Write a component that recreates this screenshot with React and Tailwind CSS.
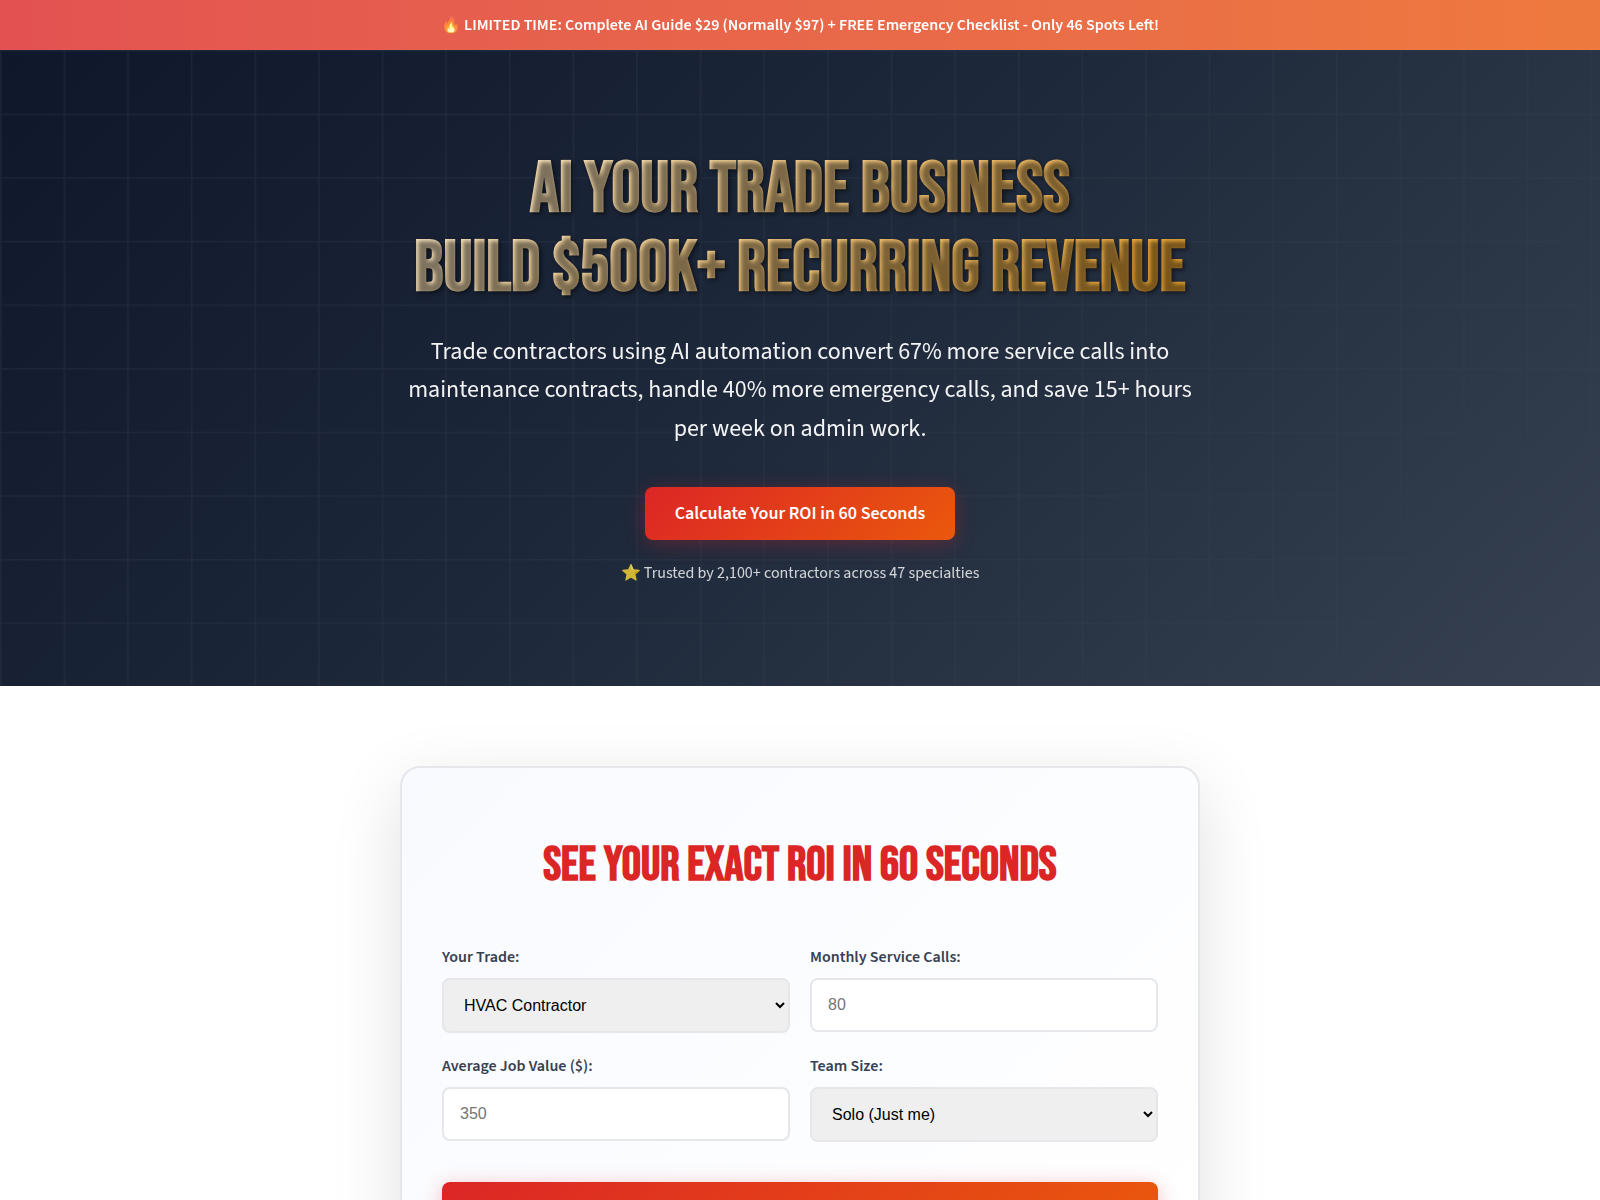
function Grid() {
  return (
    <svg
      aria-hidden="true"
      className="absolute inset-0 h-full w-full overflow-hidden opacity-30"
      viewBox="0 0 100 100"
      preserveAspectRatio="xMinYMin meet"
    >
      <defs>
        <pattern id="grid" width="10" height="10" patternUnits="userSpaceOnUse">
          <path d="M 10 0 L 0 0 0 10" fill="none" stroke="#374151" strokeWidth="0.5" />
        </pattern>
      </defs>
      <rect width="1000" height="100" fill="url(#grid)" />
    </svg>
  );
}

const controlBase =
  "w-full rounded-lg border-2 border-[#e5e7eb] p-4 font-['Liberation_Sans',sans-serif] text-base";

function Field({ id, label, children }) {
  return (
    <div>
      <label htmlFor={id} className="mb-2 block font-semibold text-[#374151]">
        {label}
      </label>
      {children}
    </div>
  );
}

function SelectField({ id, label, options }) {
  return (
    <Field id={id} label={label}>
      <select id={id} className={`${controlBase} block h-[55px] bg-[#efefef] text-black`}>
        {options.map((option) => (
          <option key={option}>{option}</option>
        ))}
      </select>
    </Field>
  );
}

function NumberField({ id, label, placeholder }) {
  return (
    <Field id={id} label={label}>
      <input
        id={id}
        type="number"
        placeholder={placeholder}
        className={`${controlBase} block h-[54px] bg-white text-black placeholder:text-[#757575]`}
      />
    </Field>
  );
}

export default function App() {
  return (
    <div className="min-h-screen bg-white font-['Source_Sans_Pro','Source_Sans_3','Noto_Sans_CJK_SC',sans-serif] leading-[26px] text-[#1f2937]">
      <div className="bg-linear-to-r from-[#dc2626] to-[#ea580c] px-5 py-3 text-center font-semibold text-white opacity-80">
        🔥 LIMITED TIME: Complete AI Guide $29 (Normally $97) + FREE Emergency Checklist - Only 46 Spots Left!
      </div>

      <header className="relative overflow-hidden bg-linear-[135deg,#0f172a_0%,#1e293b_50%,#374151_100%] px-5 py-[100px] text-center text-white">
        <Grid />
        <div className="relative mx-auto flex max-w-[800px] flex-col items-center">
          <h1 className="mb-[25px] w-full bg-linear-[135deg,#fff1d6,#f0a52a] bg-clip-text font-['Bebas_Neue','Oswald',sans-serif] text-7xl leading-[79px] font-bold text-transparent [text-shadow:2px_2px_4px_rgba(0,0,0,0.5)]">
            AI Your Trade Business
            <br />
            Build $500K+ Recurring Revenue
          </h1>
          <p className="mb-[39px] text-2xl leading-[1.6] opacity-95">
            Trade contractors using AI automation convert 67% more service calls into maintenance contracts, handle 40%
            more emergency calls, and save 15+ hours per week on admin work.
          </p>
          <button
            type="button"
            className="rounded-lg bg-linear-[135deg,#dc2626,#ea580c] px-[30px] py-3 text-lg leading-[29px] font-semibold text-white shadow-[0_4px_20px_rgba(220,38,38,0.3)]"
          >
            Calculate Your ROI in 60 Seconds
          </button>
          <p className="mt-5 opacity-80">⭐ Trusted by 2,100+ contractors across 47 specialties</p>
        </div>
      </header>

      <main className="px-5 py-20">
        <form
          onSubmit={(event) => event.preventDefault()}
          className="mx-auto max-w-[800px] rounded-[20px] border-2 border-[#e5e7eb] bg-linear-[135deg,#f8faff,#ffffff] p-10 shadow-[0_20px_70px_rgba(0,0,0,0.12)]"
        >
          <h2 className="mt-5 mb-10 text-center font-['Bebas_Neue','Oswald',sans-serif] text-5xl leading-[76px] font-bold text-[#dc2626]">
            See Your Exact ROI in 60 Seconds
          </h2>
          <div className="grid gap-5 md:grid-cols-2">
            <SelectField
              id="trade"
              label="Your Trade:"
              options={["HVAC Contractor", "Plumber", "Electrician", "Roofer"]}
            />
            <NumberField id="calls" label="Monthly Service Calls:" placeholder="80" />
            <NumberField id="job-value" label="Average Job Value ($):" placeholder="350" />
            <SelectField id="team" label="Team Size:" options={["Solo (Just me)", "2-5 people", "6-10 people"]} />
          </div>
          <button
            type="submit"
            aria-label="Calculate ROI"
            className="mt-10 block h-[54px] w-full rounded-lg bg-linear-[135deg,#dc2626,#ea580c] shadow-[0_4px_20px_rgba(220,38,38,0.3)]"
          />
        </form>
      </main>
    </div>
  );
}
